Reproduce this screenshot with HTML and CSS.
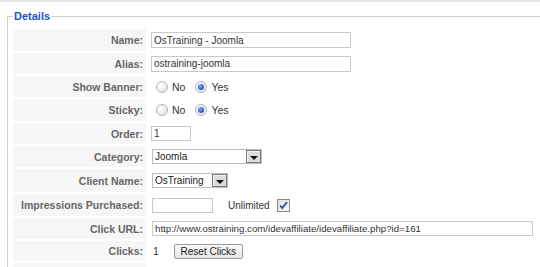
FILE: index.html
```html
<!DOCTYPE html>
<html>
<head>
<meta charset="utf-8">
<link rel="stylesheet" href="styles.css">
</head>
<body>
<div class="topline"></div>
<fieldset class="details">
  <legend class="legend">Details</legend>
  <div class="form">
    <div class="key">Name:</div>
    <div class="val"><input class="text w-name" type="text" value="OsTraining - Joomla"></div>

    <div class="key">Alias:</div>
    <div class="val"><input class="text w-name" type="text" value="ostraining-joomla"></div>

    <div class="key">Show Banner:</div>
    <div class="val">
      <span class="radio"></span><span class="opt opt-no">No</span>
      <span class="radio checked"></span><span class="opt">Yes</span>
    </div>

    <div class="key">Sticky:</div>
    <div class="val">
      <span class="radio"></span><span class="opt opt-no">No</span>
      <span class="radio checked"></span><span class="opt">Yes</span>
    </div>

    <div class="key">Order:</div>
    <div class="val"><input class="text w-order" type="text" value="1"></div>

    <div class="key">Category:</div>
    <div class="val">
      <div class="select w-cat"><span class="sel-text">Joomla</span><span class="sel-btn"><span class="arrow"></span></span></div>
    </div>

    <div class="key">Client Name:</div>
    <div class="val">
      <div class="select w-client"><span class="sel-text">OsTraining</span><span class="sel-btn"><span class="arrow"></span></span></div>
    </div>

    <div class="key">Impressions Purchased:</div>
    <div class="val">
      <input class="text w-impr" type="text" value="">
      <span class="unlimited">Unlimited</span>
      <span class="checkbox"><svg width="11" height="11" viewBox="0 0 11 11"><path d="M2 5.5 L4.3 8 L9 2" fill="none" stroke="#2b4fa8" stroke-width="1.8"/></svg></span>
    </div>

    <div class="key">Click URL:</div>
    <div class="val"><input class="text w-url" type="text" value="http://www.ostraining.com/idevaffiliate/idevaffiliate.php?id=161"></div>

    <div class="key">Clicks:</div>
    <div class="val"><span class="clicks">1</span><span class="button">Reset Clicks</span></div>

    <div class="key"></div>
    <div class="val"></div>
  </div>
</fieldset>
</body>
</html>
```

FILE: styles.css
```css
html, body {
  margin: 0;
  padding: 0;
  background: #fff;
  font-family: "Liberation Sans", Arial, sans-serif;
  color: #333;
  overflow: hidden;
}

.topline {
  height: 2px;
  background: #e2e2e2;
}

.details {
  margin: 7px -40px 0 7px;
  padding: 6px 0 0 5px;
  border: 1px solid #d0d0d0;
  border-bottom: none;
}

.legend {
  padding: 0 1px;
  font-size: 11px;
  line-height: 14px;
  font-weight: bold;
  color: #1656cc;
}

.form {
  display: grid;
  grid-template-columns: 133px 1fr;
  grid-template-rows: 22px 21px 21px 22px 21px 21px 23px 22px 21px 20px 21px;
  column-gap: 2px;
  row-gap: 2px;
}

.key {
  background: #f6f6f6;
  color: #666;
  font-weight: bold;
  font-size: 10.5px;
  display: flex;
  align-items: center;
  justify-content: flex-end;
  padding-right: 3px;
  white-space: nowrap;
}

.val {
  display: flex;
  align-items: center;
  padding-left: 3px;
  font-size: 10px;
  white-space: nowrap;
}

.text {
  box-sizing: border-box;
  height: 16px;
  margin: 0;
  padding: 0 2px;
  border: 1px solid #c8c8c8;
  font-family: "Liberation Sans", Arial, sans-serif;
  font-size: 10px;
  color: #333;
  background: #fff;
  outline: none;
}

.w-name { width: 200px; }
.w-order { width: 40px; height: 15px; }
.w-impr { width: 61px; height: 15px; margin-left: 1px; }
.w-url { width: 381px; height: 15px; margin-left: 1px; font-size: 9.7px; }

.radio {
  box-sizing: border-box;
  width: 12px;
  height: 12px;
  border-radius: 50%;
  border: 1px solid #b4b4b4;
  background: radial-gradient(circle at 35% 35%, #ffffff 0%, #ececec 60%, #d6d6d6 100%);
  display: inline-flex;
  align-items: center;
  justify-content: center;
  margin-left: 5px;
}

.radio.checked::after {
  content: "";
  width: 6px;
  height: 6px;
  border-radius: 50%;
  background: radial-gradient(circle at 40% 35%, #7fb0ff 0%, #2a62d0 55%, #1a3f9a 100%);
}

.opt {
  font-size: 10.5px;
  color: #333;
  margin-left: 4px;
}

.opt-no { margin-right: 5px; }

.select {
  box-sizing: border-box;
  height: 15px;
  margin-left: 1px;
  border: 1px solid #bdbdbd;
  display: flex;
  align-items: stretch;
  background: #fff;
}

.w-cat { width: 110px; }
.w-client { width: 76px; }

.sel-text {
  flex: 1;
  font-size: 10px;
  color: #222;
  padding-left: 2px;
  line-height: 13px;
}

.sel-btn {
  box-sizing: border-box;
  width: 15px;
  border: 1px solid #7a7a7a;
  background: #dcdcdc;
  box-shadow: inset 1px 1px 0 #f4f4f4;
  display: flex;
  align-items: center;
  justify-content: center;
}

.arrow {
  width: 0;
  height: 0;
  margin-top: 2px;
  border-left: 4px solid transparent;
  border-right: 4px solid transparent;
  border-top: 4px solid #111;
}

.unlimited {
  margin-left: 15px;
  font-size: 10px;
  color: #333;
}

.checkbox {
  box-sizing: border-box;
  width: 13px;
  height: 13px;
  margin-left: 7px;
  border: 1px solid #8a8a8a;
  background: linear-gradient(135deg, #e2e2e2, #f6f6f6);
  display: inline-flex;
  align-items: center;
  justify-content: center;
}

.clicks {
  margin-left: 2px;
  font-size: 10.5px;
  color: #333;
}

.button {
  box-sizing: border-box;
  width: 69px;
  height: 15px;
  margin-left: 15px;
  border: 1px solid #9a9a9a;
  border-radius: 2px;
  background: linear-gradient(#fafafa, #e4e4e4);
  font-size: 10px;
  color: #222;
  display: inline-flex;
  align-items: center;
  justify-content: center;
}
```
